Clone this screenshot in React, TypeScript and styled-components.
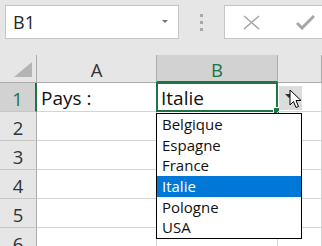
import styled, { createGlobalStyle } from 'styled-components';

const GlobalStyle = createGlobalStyle`
    html, body {
        margin: 0;
        padding: 0;
        background: #ffffff;
        overflow: hidden;
    }
    body {
        font-family: "Open Sans", "Noto Sans", sans-serif;
    }
`;

const GREEN = '#217346';

const Page = styled.div`
    width: 322px;
    height: 246px;
    overflow: hidden;
    position: relative;
`;

const TopBar = styled.div`
    height: 55px;
    background: #e6e6e6;
    display: flex;
    align-items: flex-start;
    padding: 5px 0 0 5px;
    box-sizing: border-box;
`;

const NameBox = styled.div`
    width: 174px;
    height: 34px;
    background: #fff;
    border: 1px solid #c6c6c6;
    box-sizing: border-box;
    display: flex;
    align-items: center;
    justify-content: space-between;
    padding: 0 10px 0 7px;
    font-size: 18px;
    color: #262626;
`;

const SmallArrow = styled.span`
    width: 0;
    height: 0;
    border-left: 3px solid transparent;
    border-right: 3px solid transparent;
    border-top: 3px solid #707070;
    margin-top: -2px;
`;

const Dots = styled.div`
    width: 45px;
    height: 34px;
    display: flex;
    flex-direction: column;
    align-items: center;
    justify-content: center;
    gap: 4px;
    padding-top: 1px;
    box-sizing: border-box;
`;

const Dot = styled.span`
    width: 3px;
    height: 3px;
    background: #a8a8a8;
`;

const FormulaBox = styled.div`
    flex: 1;
    height: 34px;
    margin-right: -20px;
    background: #fff;
    border: 1px solid #c6c6c6;
    box-sizing: border-box;
    display: flex;
    align-items: center;
    gap: 36px;
    padding-left: 18px;
`;

const Sheet = styled.div`
    display: flex;
    flex-direction: column;
`;

const Row = styled.div<{ $h: number }>`
    display: flex;
    height: ${p => p.$h}px;
`;

const HeadCell = styled.div<{ $w?: number; $sel?: boolean }>`
    width: ${p => (p.$w ? `${p.$w}px` : 'auto')};
    flex: ${p => (p.$w ? 'none' : '1')};
    box-sizing: border-box;
    background: ${p => (p.$sel ? '#d2d2d2' : '#e6e6e6')};
    border-right: 1px solid #ababab;
    border-bottom: ${p => (p.$sel ? `2px solid ${GREEN}` : '1px solid #ababab')};
    color: ${p => (p.$sel ? GREEN : '#333')};
    font-size: 18.5px;
    display: flex;
    align-items: center;
    justify-content: center;
    padding-top: 2px;
`;

const Corner = styled.div`
    width: 37px;
    flex: none;
    box-sizing: border-box;
    background: #e6e6e6;
    border-right: 1px solid #ababab;
    border-bottom: 1px solid #ababab;
    display: flex;
    align-items: flex-end;
    justify-content: flex-end;
    padding: 0 4px 5px 0;
`;

const RowHead = styled.div<{ $sel?: boolean }>`
    width: 37px;
    flex: none;
    box-sizing: border-box;
    background: ${p => (p.$sel ? '#d2d2d2' : '#e6e6e6')};
    border-right: ${p => (p.$sel ? `2px solid ${GREEN}` : '1px solid #ababab')};
    border-bottom: 1px solid #c6c6c6;
    color: ${p => (p.$sel ? GREEN : '#333')};
    font-size: 18.5px;
    display: flex;
    align-items: center;
    justify-content: center;
    padding-top: 2px;
`;

const Cell = styled.div<{ $w?: number }>`
    width: ${p => (p.$w ? `${p.$w}px` : 'auto')};
    flex: ${p => (p.$w ? 'none' : '1')};
    box-sizing: border-box;
    border-right: 1px solid #d4d4d4;
    border-bottom: 1px solid #d4d4d4;
    font-size: 19px;
    color: #111;
    display: flex;
    align-items: center;
    padding: 2px 0 0 4px;
    position: relative;
`;

const Selection = styled.div`
    position: absolute;
    left: -1px;
    top: -1px;
    right: -1px;
    bottom: -1px;
    border: 2px solid ${GREEN};
    pointer-events: none;
`;

const FillHandle = styled.span`
    position: absolute;
    right: -4px;
    bottom: -4px;
    width: 5px;
    height: 5px;
    background: ${GREEN};
    border: 1px solid #fff;
`;

const DropButton = styled.div`
    position: absolute;
    left: 122px;
    top: 3px;
    width: 23px;
    height: 24px;
    background: #dcdcdc;
    display: flex;
    align-items: center;
    justify-content: center;
`;

const DropArrow = styled.span`
    width: 0;
    height: 0;
    border-left: 4px solid transparent;
    border-right: 4px solid transparent;
    border-top: 4px solid #333;
    margin: -4px 0 0 -4px;
`;

const Cursor = styled.svg`
    position: absolute;
    left: 10px;
    top: 3px;
`;

const List = styled.ul`
    position: absolute;
    left: -1px;
    top: 30px;
    width: 146px;
    margin: 0;
    padding: 0;
    list-style: none;
    background: #fff;
    border: 1px solid #000;
    box-sizing: border-box;
    z-index: 2;
`;

const Item = styled.li<{ $active?: boolean }>`
    height: 20.7px;
    line-height: 20px;
    font-size: 15px;
    padding-left: 5px;
    color: ${p => (p.$active ? '#fff' : '#111')};
    background: ${p => (p.$active ? '#0078d7' : 'transparent')};
`;

const countries = ['Belgique', 'Espagne', 'France', 'Italie', 'Pologne', 'USA'];

const App = () => {
    return (
        <Page>
            <GlobalStyle />
            <TopBar>
                <NameBox>
                    B1
                    <SmallArrow />
                </NameBox>
                <Dots>
                    <Dot />
                    <Dot />
                    <Dot />
                </Dots>
                <FormulaBox>
                    <svg width="17" height="15" viewBox="0 0 17 15">
                        <path d="M1 1 L16 14 M16 1 L1 14" stroke="#a6a6a6" strokeWidth="1.6" fill="none" />
                    </svg>
                    <svg width="19" height="15" viewBox="0 0 19 15">
                        <path d="M1 8 L6 13 L18 1" stroke="#a6a6a6" strokeWidth="3" fill="none" />
                    </svg>
                </FormulaBox>
            </TopBar>
            <Sheet>
                <Row $h={28}>
                    <Corner>
                        <svg width="18" height="15" viewBox="0 0 18 15">
                            <polygon points="18,0 18,15 0,15" fill="#b4b4b4" />
                        </svg>
                    </Corner>
                    <HeadCell $w={120}>A</HeadCell>
                    <HeadCell $w={121} $sel>B</HeadCell>
                    <HeadCell />
                </Row>
                <Row $h={29}>
                    <RowHead $sel>1</RowHead>
                    <Cell $w={120}>Pays :</Cell>
                    <Cell $w={121}>
                        Italie
                        <Selection>
                            <FillHandle />
                        </Selection>
                        <DropButton>
                            <DropArrow />
                            <Cursor width="13" height="20" viewBox="0 0 13 20">
                                <path d="M1 1 L1 16 L4.5 12.5 L7 18.5 L9.5 17.5 L7 11.5 L12 11.5 Z" fill="#fff" stroke="#000" strokeWidth="1" />
                            </Cursor>
                        </DropButton>
                        <List>
                            {countries.map(c => (
                                <Item key={c} $active={c === 'Italie'}>{c}</Item>
                            ))}
                        </List>
                    </Cell>
                    <Cell />
                </Row>
                {[2, 3, 4, 5, 6].map(n => (
                    <Row $h={29} key={n}>
                        <RowHead>{n}</RowHead>
                        <Cell $w={120} />
                        <Cell $w={121} />
                        <Cell />
                    </Row>
                ))}
            </Sheet>
        </Page>
    );
};

export default App;
